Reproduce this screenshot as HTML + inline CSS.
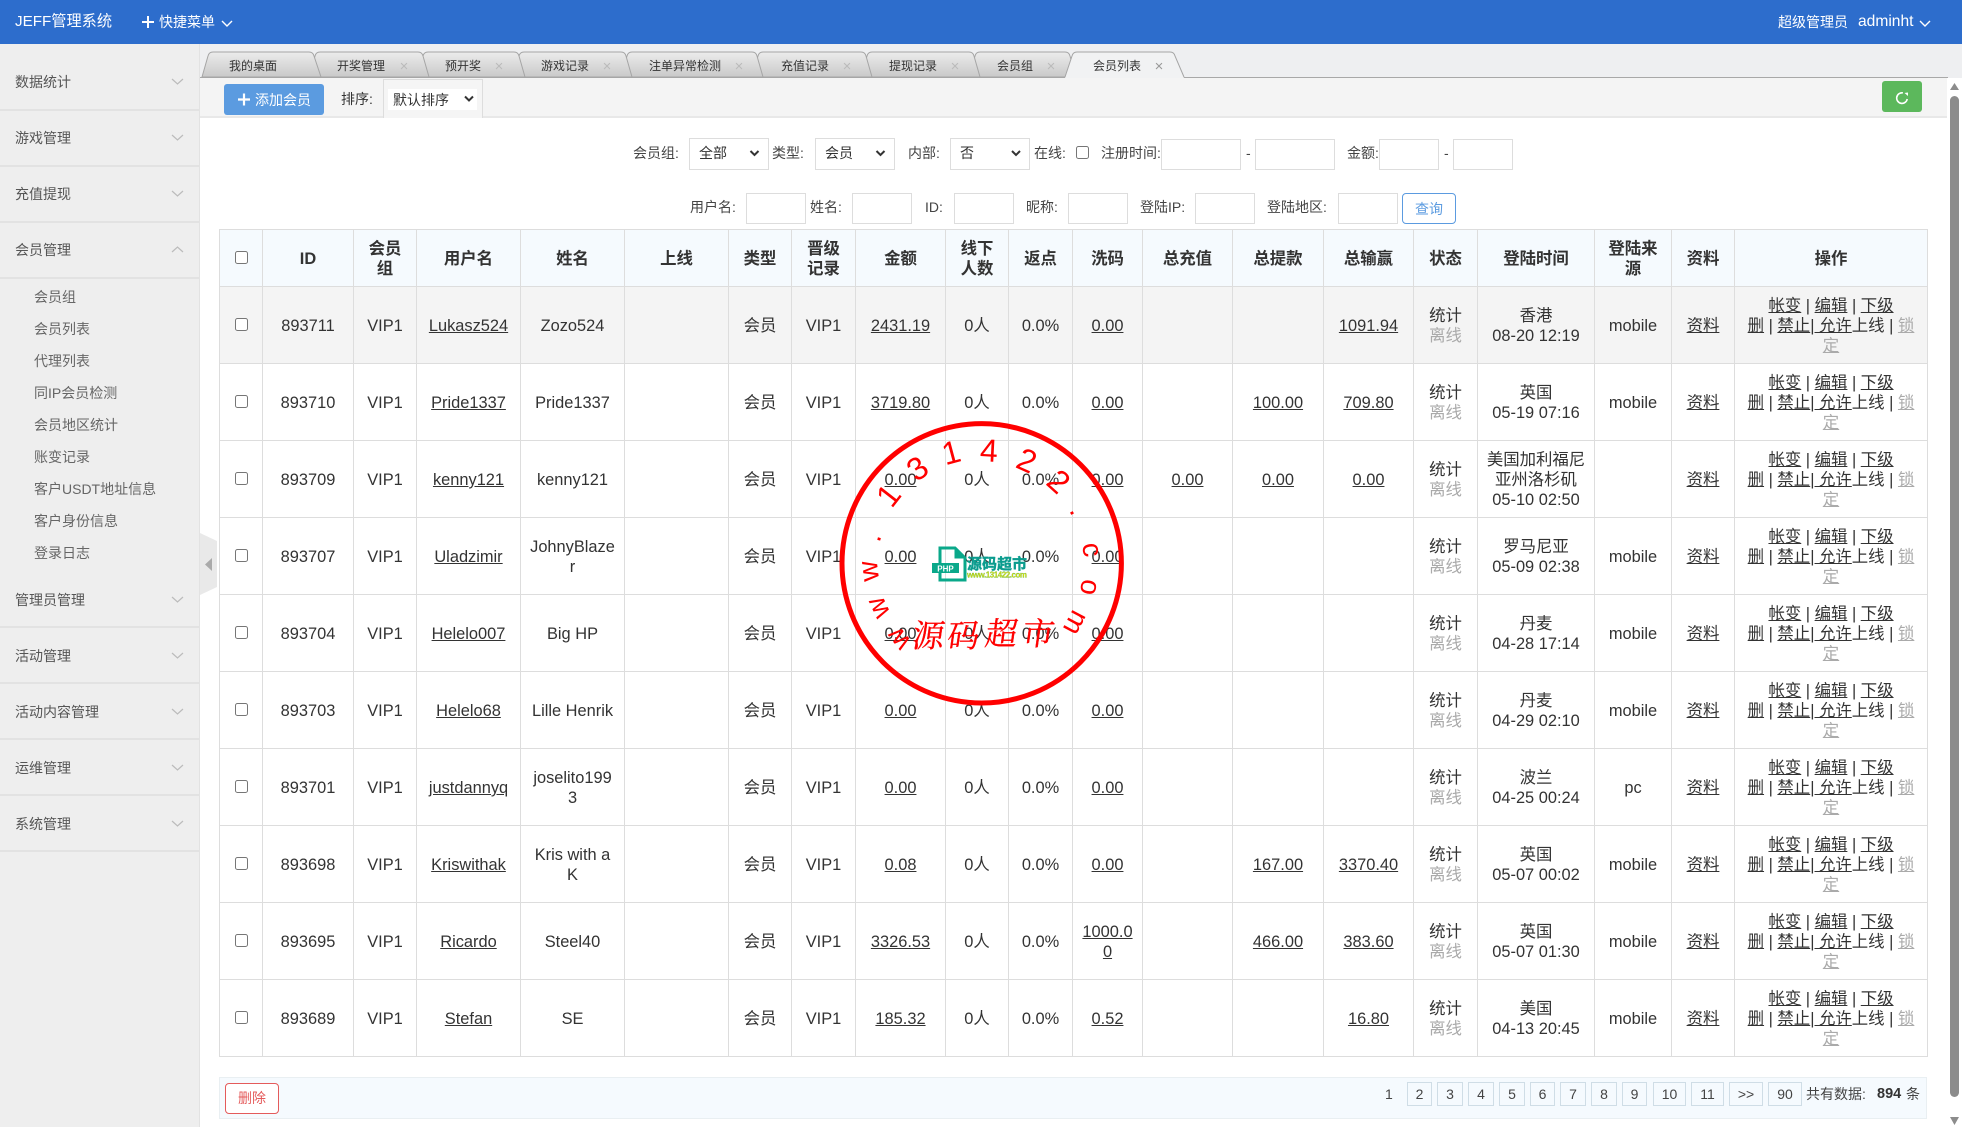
<!DOCTYPE html>
<html lang="zh"><head><meta charset="utf-8"><title>JEFF管理系统</title>
<style>
*{box-sizing:border-box}
html,body{margin:0;padding:0;width:1962px;height:1127px;overflow:hidden;background:#fff;font-family:"Liberation Sans","Noto Sans CJK SC",sans-serif;color:#333;font-size:14px}
.a{position:absolute;white-space:nowrap;line-height:20px}
.b{position:absolute;background:#fff;border:1px solid #ddd}
.m{left:15px;color:#555}
.s{left:34px;color:#666}
.l{position:absolute;left:0;width:199px;height:2px;background:#e2e2e2}
.p{position:absolute;top:1082px;height:24px;border:1px solid #cfdde6;text-align:center;line-height:22px;font-size:14px;color:#444}
table{position:absolute;left:219px;top:229px;width:1708px;border-collapse:collapse;table-layout:fixed;font-size:16.4px;line-height:20px;color:#333}
td,th{border:1px solid #ddd;padding:2px 0 0;text-align:center;vertical-align:middle;overflow:hidden}
th{background:#f5fafe;height:57px;font-weight:bold}
td{height:77px}
tr.h td{background:#f4f4f4}
input[type=checkbox]{width:13px;height:13px;display:block;margin:auto;transform:translateY(-2px)}
u{text-decoration:underline}
.g{color:#aaa}
</style></head><body>
<div style="position:absolute;left:0;top:0;width:1962px;height:44px;background:#2d6dcc"></div>
<div class="a" style="left:15px;top:12px;color:#fff;font-size:15.2px">JEFF管理系统</div>
<div class="a" style="left:159px;top:12px;color:#fff;font-size:14px">快捷菜单</div>
<div class="a" style="left:1778px;top:12px;color:#fff;font-size:14px">超级管理员</div>
<div class="a" style="left:1858px;top:12px;color:#fff;font-size:15.6px">adminht</div>

<div style="position:absolute;left:200px;top:44px;width:1762px;height:34px;background:#eeeff1"></div>
<div style="position:absolute;left:0;top:44px;width:200px;height:1083px;background:#eee;border-right:1px solid #e2e2e2"></div>
<div style="position:absolute;left:200px;top:78px;width:1747px;height:40px;background:#f4f4f4;border-bottom:2px solid #e8e8e8"></div>

<div class="a m" style="top:72px">数据统计</div><div class="l" style="top:109px"></div>
<div class="a m" style="top:128px">游戏管理</div><div class="l" style="top:165px"></div>
<div class="a m" style="top:184px">充值提现</div><div class="l" style="top:221px"></div>
<div class="a m" style="top:240px">会员管理</div><div class="l" style="top:277px"></div>
<div class="a s" style="top:287px">会员组</div>
<div class="a s" style="top:319px">会员列表</div>
<div class="a s" style="top:351px">代理列表</div>
<div class="a s" style="top:383px">同IP会员检测</div>
<div class="a s" style="top:415px">会员地区统计</div>
<div class="a s" style="top:447px">账变记录</div>
<div class="a s" style="top:479px">客户USDT地址信息</div>
<div class="a s" style="top:511px">客户身份信息</div>
<div class="a s" style="top:543px">登录日志</div>
<div class="a m" style="top:590px">管理员管理</div><div class="l" style="top:626px"></div>
<div class="a m" style="top:646px">活动管理</div><div class="l" style="top:682px"></div>
<div class="a m" style="top:702px">活动内容管理</div><div class="l" style="top:738px"></div>
<div class="a m" style="top:758px">运维管理</div><div class="l" style="top:794px"></div>
<div class="a m" style="top:814px">系统管理</div><div class="l" style="top:850px"></div>

<div style="position:absolute;left:224px;top:84px;width:100px;height:31px;background:#5b9be0;border-radius:3px"></div>
<div class="a" style="left:255px;top:90px;color:#fff;font-size:14px">添加会员</div>
<div class="a" style="left:341px;top:89px;color:#333">排序:</div>
<div style="position:absolute;left:383px;top:79px;width:100px;height:39px;background:#f5f5f5;border:1px solid #ddd;border-bottom:0"></div>
<div style="position:absolute;left:388px;top:89px;width:89px;height:21px;background:#fff;line-height:22px;padding-left:5px;color:#333">默认排序</div>
<div style="position:absolute;left:1882px;top:81px;width:40px;height:31px;background:#5cb85c;border-radius:3px"></div>

<div class="a" style="left:633px;top:143px;color:#444">会员组:</div>
<div class="b" style="left:689px;top:138px;width:80px;height:32px;padding-left:9px;line-height:29px;color:#333">全部</div>
<div class="a" style="left:772px;top:143px;color:#444">类型:</div>
<div class="b" style="left:815px;top:138px;width:80px;height:32px;padding-left:9px;line-height:29px;color:#333">会员</div>
<div class="a" style="left:908px;top:143px;color:#444">内部:</div>
<div class="b" style="left:950px;top:138px;width:80px;height:32px;padding-left:9px;line-height:29px;color:#333">否</div>
<div class="a" style="left:1034px;top:143px;color:#444">在线:</div>
<input type="checkbox" style="position:absolute;left:1076px;top:146px;margin:0;transform:none">
<div class="a" style="left:1101px;top:143px;color:#444">注册时间:</div>
<div class="b" style="left:1161px;top:139px;width:80px;height:31px"></div>
<div class="a" style="left:1246px;top:143px;color:#444">-</div>
<div class="b" style="left:1255px;top:139px;width:80px;height:31px"></div>
<div class="a" style="left:1347px;top:143px;color:#444">金额:</div>
<div class="b" style="left:1379px;top:139px;width:60px;height:31px"></div>
<div class="a" style="left:1444px;top:143px;color:#444">-</div>
<div class="b" style="left:1453px;top:139px;width:60px;height:31px"></div>

<div class="a" style="left:690px;top:197px;color:#444">用户名:</div>
<div class="b" style="left:746px;top:193px;width:60px;height:31px"></div>
<div class="a" style="left:810px;top:197px;color:#444">姓名:</div>
<div class="b" style="left:852px;top:193px;width:60px;height:31px"></div>
<div class="a" style="left:925px;top:197px;color:#444">ID:</div>
<div class="b" style="left:954px;top:193px;width:60px;height:31px"></div>
<div class="a" style="left:1026px;top:197px;color:#444">昵称:</div>
<div class="b" style="left:1068px;top:193px;width:60px;height:31px"></div>
<div class="a" style="left:1140px;top:197px;color:#444">登陆IP:</div>
<div class="b" style="left:1195px;top:193px;width:60px;height:31px"></div>
<div class="a" style="left:1267px;top:197px;color:#444">登陆地区:</div>
<div class="b" style="left:1338px;top:193px;width:60px;height:31px"></div>
<div style="position:absolute;left:1402px;top:193px;width:54px;height:31px;border:1px solid #5b9be0;border-radius:4px;color:#5b9be0;text-align:center;line-height:31px">查询</div>

<table>
<colgroup><col style="width:43px"><col style="width:91px"><col style="width:63px"><col style="width:104px"><col style="width:104px"><col style="width:104px"><col style="width:63px"><col style="width:64px"><col style="width:90px"><col style="width:63px"><col style="width:64px"><col style="width:70px"><col style="width:90px"><col style="width:91px"><col style="width:90px"><col style="width:64px"><col style="width:117px"><col style="width:77px"><col style="width:63px"><col style="width:193px"></colgroup>
<tr><th><input type="checkbox"></th><th>ID</th><th>会员<br>组</th><th>用户名</th><th>姓名</th><th>上线</th><th>类型</th><th>晋级<br>记录</th><th>金额</th><th>线下<br>人数</th><th>返点</th><th>洗码</th><th>总充值</th><th>总提款</th><th>总输赢</th><th>状态</th><th>登陆时间</th><th>登陆来<br>源</th><th>资料</th><th>操作</th></tr>
<tr class="h"><td><input type="checkbox"></td><td>893711</td><td>VIP1</td><td><u>Lukasz524</u></td><td>Zozo524</td><td></td><td>会员</td><td>VIP1</td><td><u>2431.19</u></td><td>0人</td><td>0.0%</td><td><u>0.00</u></td><td></td><td></td><td><u>1091.94</u></td><td>统计<br><span class="g">离线</span></td><td>香港<br>08-20 12:19</td><td>mobile</td><td><u>资料</u></td><td><u>帐变</u> | <u>编辑</u> | <u>下级</u><br><u>删</u> | <u>禁止</u><u>| 允许</u>上线 | <u class="g">锁</u><br><u class="g">定</u></td></tr>
<tr><td><input type="checkbox"></td><td>893710</td><td>VIP1</td><td><u>Pride1337</u></td><td>Pride1337</td><td></td><td>会员</td><td>VIP1</td><td><u>3719.80</u></td><td>0人</td><td>0.0%</td><td><u>0.00</u></td><td></td><td><u>100.00</u></td><td><u>709.80</u></td><td>统计<br><span class="g">离线</span></td><td>英国<br>05-19 07:16</td><td>mobile</td><td><u>资料</u></td><td><u>帐变</u> | <u>编辑</u> | <u>下级</u><br><u>删</u> | <u>禁止</u><u>| 允许</u>上线 | <u class="g">锁</u><br><u class="g">定</u></td></tr>
<tr><td><input type="checkbox"></td><td>893709</td><td>VIP1</td><td><u>kenny121</u></td><td>kenny121</td><td></td><td>会员</td><td>VIP1</td><td><u>0.00</u></td><td>0人</td><td>0.0%</td><td><u>0.00</u></td><td><u>0.00</u></td><td><u>0.00</u></td><td><u>0.00</u></td><td>统计<br><span class="g">离线</span></td><td>美国加利福尼<br>亚州洛杉矶<br>05-10 02:50</td><td></td><td><u>资料</u></td><td><u>帐变</u> | <u>编辑</u> | <u>下级</u><br><u>删</u> | <u>禁止</u><u>| 允许</u>上线 | <u class="g">锁</u><br><u class="g">定</u></td></tr>
<tr><td><input type="checkbox"></td><td>893707</td><td>VIP1</td><td><u>Uladzimir</u></td><td>JohnyBlaze<br>r</td><td></td><td>会员</td><td>VIP1</td><td><u>0.00</u></td><td>0人</td><td>0.0%</td><td><u>0.00</u></td><td></td><td></td><td></td><td>统计<br><span class="g">离线</span></td><td>罗马尼亚<br>05-09 02:38</td><td>mobile</td><td><u>资料</u></td><td><u>帐变</u> | <u>编辑</u> | <u>下级</u><br><u>删</u> | <u>禁止</u><u>| 允许</u>上线 | <u class="g">锁</u><br><u class="g">定</u></td></tr>
<tr><td><input type="checkbox"></td><td>893704</td><td>VIP1</td><td><u>Helelo007</u></td><td>Big HP</td><td></td><td>会员</td><td>VIP1</td><td><u>0.00</u></td><td>0人</td><td>0.0%</td><td><u>0.00</u></td><td></td><td></td><td></td><td>统计<br><span class="g">离线</span></td><td>丹麦<br>04-28 17:14</td><td>mobile</td><td><u>资料</u></td><td><u>帐变</u> | <u>编辑</u> | <u>下级</u><br><u>删</u> | <u>禁止</u><u>| 允许</u>上线 | <u class="g">锁</u><br><u class="g">定</u></td></tr>
<tr><td><input type="checkbox"></td><td>893703</td><td>VIP1</td><td><u>Helelo68</u></td><td>Lille Henrik</td><td></td><td>会员</td><td>VIP1</td><td><u>0.00</u></td><td>0人</td><td>0.0%</td><td><u>0.00</u></td><td></td><td></td><td></td><td>统计<br><span class="g">离线</span></td><td>丹麦<br>04-29 02:10</td><td>mobile</td><td><u>资料</u></td><td><u>帐变</u> | <u>编辑</u> | <u>下级</u><br><u>删</u> | <u>禁止</u><u>| 允许</u>上线 | <u class="g">锁</u><br><u class="g">定</u></td></tr>
<tr><td><input type="checkbox"></td><td>893701</td><td>VIP1</td><td><u>justdannyq</u></td><td>joselito199<br>3</td><td></td><td>会员</td><td>VIP1</td><td><u>0.00</u></td><td>0人</td><td>0.0%</td><td><u>0.00</u></td><td></td><td></td><td></td><td>统计<br><span class="g">离线</span></td><td>波兰<br>04-25 00:24</td><td>pc</td><td><u>资料</u></td><td><u>帐变</u> | <u>编辑</u> | <u>下级</u><br><u>删</u> | <u>禁止</u><u>| 允许</u>上线 | <u class="g">锁</u><br><u class="g">定</u></td></tr>
<tr><td><input type="checkbox"></td><td>893698</td><td>VIP1</td><td><u>Kriswithak</u></td><td>Kris with a<br>K</td><td></td><td>会员</td><td>VIP1</td><td><u>0.08</u></td><td>0人</td><td>0.0%</td><td><u>0.00</u></td><td></td><td><u>167.00</u></td><td><u>3370.40</u></td><td>统计<br><span class="g">离线</span></td><td>英国<br>05-07 00:02</td><td>mobile</td><td><u>资料</u></td><td><u>帐变</u> | <u>编辑</u> | <u>下级</u><br><u>删</u> | <u>禁止</u><u>| 允许</u>上线 | <u class="g">锁</u><br><u class="g">定</u></td></tr>
<tr><td><input type="checkbox"></td><td>893695</td><td>VIP1</td><td><u>Ricardo</u></td><td>Steel40</td><td></td><td>会员</td><td>VIP1</td><td><u>3326.53</u></td><td>0人</td><td>0.0%</td><td><u>1000.0<br>0</u></td><td></td><td><u>466.00</u></td><td><u>383.60</u></td><td>统计<br><span class="g">离线</span></td><td>英国<br>05-07 01:30</td><td>mobile</td><td><u>资料</u></td><td><u>帐变</u> | <u>编辑</u> | <u>下级</u><br><u>删</u> | <u>禁止</u><u>| 允许</u>上线 | <u class="g">锁</u><br><u class="g">定</u></td></tr>
<tr><td><input type="checkbox"></td><td>893689</td><td>VIP1</td><td><u>Stefan</u></td><td>SE</td><td></td><td>会员</td><td>VIP1</td><td><u>185.32</u></td><td>0人</td><td>0.0%</td><td><u>0.52</u></td><td></td><td></td><td><u>16.80</u></td><td>统计<br><span class="g">离线</span></td><td>美国<br>04-13 20:45</td><td>mobile</td><td><u>资料</u></td><td><u>帐变</u> | <u>编辑</u> | <u>下级</u><br><u>删</u> | <u>禁止</u><u>| 允许</u>上线 | <u class="g">锁</u><br><u class="g">定</u></td></tr>
</table>

<div style="position:absolute;left:219px;top:1077px;width:1708px;height:42px;background:#f5fafe;border:1px solid #e9eff2"></div>
<div style="position:absolute;left:225px;top:1083px;width:54px;height:31px;background:#fff;border:1px solid #e45b5b;border-radius:4px;color:#e45b5b;text-align:center;line-height:29px">删除</div>
<div class="a" style="left:1385px;top:1084px;color:#444">1</div>
<div class="p" style="left:1407px;width:25px">2</div>
<div class="p" style="left:1437px;width:26px">3</div>
<div class="p" style="left:1468px;width:26px">4</div>
<div class="p" style="left:1499px;width:26px">5</div>
<div class="p" style="left:1530px;width:25px">6</div>
<div class="p" style="left:1560px;width:26px">7</div>
<div class="p" style="left:1591px;width:26px">8</div>
<div class="p" style="left:1622px;width:25px">9</div>
<div class="p" style="left:1653px;width:33px">10</div>
<div class="p" style="left:1691px;width:33px">11</div>
<div class="p" style="left:1729px;width:34px">&gt;&gt;</div>
<div class="p" style="left:1768px;width:34px">90</div>
<div class="a" style="left:1806px;top:1084px;color:#444">共有数据:</div>
<div class="a" style="left:1877px;top:1084px;color:#333;font-weight:bold;font-size:14.5px">894</div>
<div class="a" style="left:1906px;top:1084px;color:#444">条</div>

<svg width="1962" height="1127" viewBox="0 0 1962 1127" style="position:absolute;left:0;top:0;pointer-events:none" font-family="'Liberation Sans','Noto Sans CJK SC',sans-serif">
<defs><linearGradient id="t" x1="0" y1="0" x2="0" y2="1"><stop offset="0" stop-color="#ececec"/><stop offset="1" stop-color="#c9c9c9"/></linearGradient></defs>
<g fill="none" stroke="#fff" stroke-width="2">
<path d="M142 22h12M148 16v12"/>
</g>
<g fill="none" stroke="#fff" stroke-width="1.4">
<path d="M222 21l5 5 5-5"/>
<path d="M1920 21l5 5 5-5"/>
</g>
<g fill="none" stroke="#bbb" stroke-width="1.2">
<path d="M172 79l5.500 5 5.500-5"/><path d="M172 135l5.500 5 5.500-5"/><path d="M172 191l5.500 5 5.500-5"/><path d="M172 252l5.500-5 5.500 5"/>
<path d="M172 597l5.500 5 5.500-5"/><path d="M172 653l5.500 5 5.500-5"/><path d="M172 709l5.500 5 5.500-5"/><path d="M172 765l5.500 5 5.500-5"/><path d="M172 821l5.500 5 5.500-5"/>
</g>
<g fill="none" stroke="#333" stroke-width="2">
<path d="M465 96.500l4 4 4-4"/><path d="M750.500 151l4 4 4-4"/><path d="M876.500 151l4 4 4-4"/><path d="M1012 151l4 4 4-4"/>
</g>
<path d="M200 533L217 541V587L200 595Z" fill="#e9e9e9"/>
<path d="M205 564.500L212 558V571Z" fill="#aaa"/>
<path d="M1902 92.800a5.300 5.300 0 1 0 5.300 5.300" fill="none" stroke="#fff" stroke-width="1.600" transform="rotate(10 1902 98)"/>
<path d="M1904.500 93l3.500-.5 0 3.500z" fill="#fff"/>
<path d="M238 99.500h12M244 93.500v12" stroke="#fff" stroke-width="2.200" fill="none"/>

<rect x="200" y="77" width="1748" height="1" fill="#a8a8a8"/>
<g stroke="#a5a5a5" fill="url(#t)">
<path d="M969 77L975 56Q976 52 980 52H1065Q1069 52 1070 56L1076 77Z"/>
<path d="M861 77L867 56Q868 52 872 52H969Q973 52 974 56L980 77Z"/>
<path d="M752 77L758 56Q759 52 763 52H861Q865 52 866 56L872 77Z"/>
<path d="M621 77L627 56Q628 52 632 52H752Q756 52 757 56L763 77Z"/>
<path d="M513 77L519 56Q520 52 524 52H621Q625 52 626 56L632 77Z"/>
<path d="M417 77L423 56Q424 52 428 52H514Q518 52 519 56L525 77Z"/>
<path d="M309 77L315 56Q316 52 320 52H418Q422 52 423 56L429 77Z"/>
<path d="M202 77L208 56Q209 52 213 52H309Q313 52 314 56L321 77Z"/>
</g>
<path d="M1065 78L1072 56Q1073 52 1077 52H1170Q1174 52 1175 56L1184 78Z" fill="#f1f2f3"/>
<path d="M1065 77L1072 56Q1073 52 1077 52H1170Q1174 52 1175 56L1184 77" fill="none" stroke="#a5a5a5"/>
<g font-size="12" fill="#333">
<text x="229" y="70">我的桌面</text><text x="337" y="70">开奖管理</text><text x="445" y="70">预开奖</text><text x="541" y="70">游戏记录</text><text x="649" y="70">注单异常检测</text><text x="781" y="70">充值记录</text><text x="889" y="70">提现记录</text><text x="997" y="70">会员组</text><text x="1093" y="70">会员列表</text>
</g>
<g font-size="15" fill="#bbb" text-anchor="middle">
<text x="404" y="71">×</text><text x="499" y="71">×</text><text x="607" y="71">×</text><text x="739" y="71">×</text><text x="847" y="71">×</text><text x="955" y="71">×</text><text x="1051" y="71">×</text><text x="1159" y="71" fill="#999">×</text>
</g>

<rect x="1950" y="96" width="9" height="1001" rx="4.500" fill="#8c8c8c"/>
<path d="M1950 90l4.500-7 4.500 7z" fill="#8c8c8c"/>
<path d="M1950 1117l4.500 8 4.500-8z" fill="#8c8c8c"/>

<circle cx="981.700" cy="563.300" r="139.700" fill="none" stroke="#f00" stroke-width="5"/>
<g fill="#f00" text-anchor="middle">
<g font-size="28">
<text transform="translate(871,571) rotate(-97)" y="7">w</text>
<text transform="translate(880,607) rotate(-115)" y="7">w</text>
<text transform="translate(900,638) rotate(-128)" y="7">w</text>
<text transform="translate(879,539) rotate(-75)" y="1.500">.</text>
<text transform="translate(1072,513) rotate(60)" y="1.500">.</text>
<text transform="translate(1090,550) rotate(82)" y="7">c</text>
<text transform="translate(1088,587) rotate(100)" y="7">o</text>
<text transform="translate(1074,622) rotate(118)" y="7">m</text>
</g>
<g font-size="32">
<text transform="translate(888,495) rotate(-52)" y="11.500">1</text>
<text transform="translate(917,468) rotate(-35)" y="11.500">3</text>
<text transform="translate(951,452) rotate(-15)" y="11.500">1</text>
<text transform="translate(989,450) rotate(3)" y="11.500">4</text>
<text transform="translate(1027,460) rotate(24)" y="11.500">2</text>
<text transform="translate(1059,481) rotate(42)" y="11.500">2</text>
</g>
</g>
<g fill="#f00" stroke="#f00" stroke-width=".3" font-size="32" font-family="'Noto Serif CJK SC',serif" text-anchor="middle">
<text transform="translate(927,647) skewX(-8)">源</text>
<text transform="translate(962,647) skewX(-8)">码</text>
<text transform="translate(1000,645) skewX(-8)">超</text>
<text transform="translate(1037,645) skewX(-8)">市</text>
</g>
<path d="M940 563V548H955L965 558V580H940V573" fill="none" stroke="#0aa88a" stroke-width="3"/>
<path d="M955 547V558H965" fill="#0aa88a" stroke="#0aa88a"/>
<rect x="932" y="563" width="27" height="10" fill="#0aa88a"/>
<text x="945.500" y="571.500" font-size="8" font-weight="bold" fill="#fff" text-anchor="middle">PHP</text>
<text x="967" y="569" font-size="15" font-weight="bold" fill="#0b9c8e" stroke="#0b9c8e" stroke-width=".4" textLength="60">源码超市</text>
<text x="967" y="577.500" font-size="8" font-weight="bold" fill="#d4e000" stroke="#2a9a60" stroke-width=".15" textLength="60">www.131422.com</text>
</svg>
</body></html>
